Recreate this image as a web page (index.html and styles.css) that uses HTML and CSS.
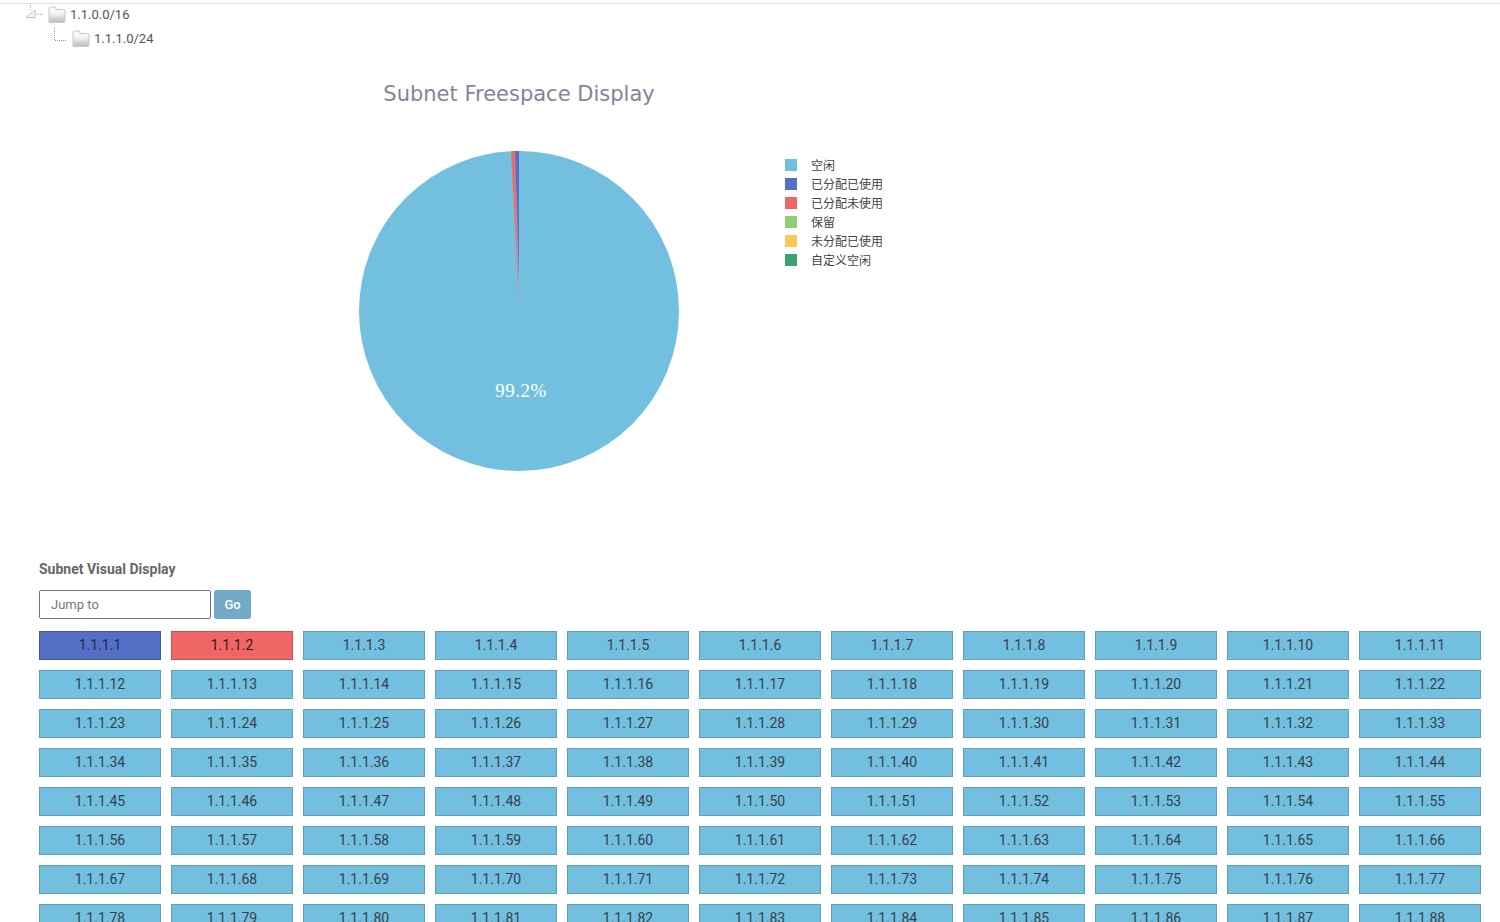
FILE: index.html
```html
<!DOCTYPE html>
<html lang="en">
<head>
<meta charset="utf-8">
<title>Subnet Freespace Display</title>
<link rel="stylesheet" href="styles.css">
</head>
<body>
<div class="page">
  <ul class="tree">
    <li class="tree-row tree-root">
      <svg class="tree-joint" width="20" height="18" viewBox="0 0 20 18"><path d="M5.500 0V6" fill="none" stroke="#b5b5b5" stroke-dasharray="1 1"/><path d="M1 12.500H10V5Z" fill="#f2f2f2" stroke="#c4c4c4"/><path d="M11 9.500H18" stroke="#aaa" stroke-dasharray="1 1"/></svg>
      <svg class="folder" width="18" height="17" viewBox="0 0 18 17"><use href="#folder"/></svg>
      <span>1.1.0.0/16</span>
    </li>
    <li class="tree-row tree-child">
      <svg class="tree-joint tree-joint-open" width="20" height="18" viewBox="0 0 20 18"><path d="M5.500 -2V11.500H18" fill="none" stroke="#999" stroke-dasharray="1 1"/></svg>
      <svg class="folder" width="18" height="17" viewBox="0 0 18 17"><use href="#folder"/></svg>
      <span>1.1.1.0/24</span>
    </li>
  </ul>
  <svg class="defs" width="0" height="0">
    <defs>
      <linearGradient id="fg" x1="0" y1="0" x2="0" y2="1"><stop offset="0" stop-color="#fdfdfd"/><stop offset=".45" stop-color="#f2f2f2"/><stop offset=".7" stop-color="#d6d6d6"/><stop offset="1" stop-color="#bdbdbd"/></linearGradient>
      <symbol id="folder" viewBox="0 0 18 17"><path d="M1 16V2.500Q1 1 2.500 1H7.500L8.500 3.500H15.500Q17 3.500 17 5V15Q17 16.500 15.500 16.500H2Q1 16.500 1 16Z" fill="url(#fg)" stroke="#c9c9c9"/></symbol>
    </defs>
  </svg>

  <h2 class="chart-title">Subnet Freespace Display</h2>
  <div class="chart-row">
    <svg class="pie" width="320" height="320" viewBox="0 0 320 320">
      <defs>
        <linearGradient id="sliver" x1="0" y1="0" x2="0" y2="1"><stop offset="0" stop-color="#f06666"/><stop offset=".7" stop-color="#e87a80"/><stop offset="1" stop-color="#a9a9b8"/></linearGradient>
      </defs>
      <circle cx="160" cy="160" r="160" fill="#73bfdf"/>
      <path d="M160 160L152 0.200A160 160 0 0 1 156 0.050Z" fill="url(#sliver)"/>
      <path d="M160 130L156 0.050A160 160 0 0 1 160 0Z" fill="#5470c6"/>
      <text class="pie-label" x="162" y="246" text-anchor="middle">99.2%</text>
    </svg>
    <ul class="legend">
      <li class="legend-item"><i class="swatch s-free"></i>空闲</li>
      <li class="legend-item"><i class="swatch s-used"></i>已分配已使用</li>
      <li class="legend-item"><i class="swatch s-idle"></i>已分配未使用</li>
      <li class="legend-item"><i class="swatch s-res"></i>保留</li>
      <li class="legend-item"><i class="swatch s-un"></i>未分配已使用</li>
      <li class="legend-item"><i class="swatch s-cus"></i>自定义空闲</li>
    </ul>
  </div>

  <h3 class="visual-title">Subnet Visual Display</h3>
  <form class="jump">
    <input class="jump-input" type="text" placeholder="Jump to">
    <button class="jump-go" type="button">Go</button>
  </form>
  <div class="grid" id="grid"></div>
</div>
<script src="grid.js"></script>
</body>
</html>
```
FILE: grid.js
```js
var grid = document.getElementById('grid');
for (var i = 1; i <= 88; i++) {
  var cell = document.createElement('div');
  cell.className = 'cell' + (i === 1 ? ' cell-used' : i === 2 ? ' cell-idle' : '');
  cell.textContent = '1.1.1.' + i;
  grid.appendChild(cell);
}
```
FILE: styles.css
```css
html, body {
  margin: 0;
  height: 922px;
  overflow: hidden;
  background: #fff;
}
.page {
  height: 922px;
  box-sizing: border-box;
  border-top: 1px solid #e1e1e1;
  margin-top: 3px;
  font-family: Roboto, "Noto Sans CJK SC", sans-serif;
  color: #555;
  overflow: hidden;
}
.tree {
  list-style: none;
  margin: -2px 0 0;
  padding: 0 0 0 25px;
}
.tree-row {
  display: flex;
  align-items: center;
  height: 24px;
  font-size: 13px;
}
.tree-child { padding-left: 24px; }
.tree-joint { flex: none; margin-right: 3px; }
.tree-joint-open { overflow: visible; }
.folder { flex: none; margin-right: 4px; }
.defs { position: absolute; }
.chart-title {
  margin: 29px 0 0;
  width: 1038px;
  height: 36px;
  text-align: center;
  font-family: "DejaVu Sans", sans-serif;
  font-size: 21px;
  line-height: 30px;
  font-weight: 400;
  color: #7f8698;
}
.chart-row {
  display: flex;
  align-items: flex-start;
  margin-top: 36px;
  padding-left: 359px;
}
.pie { flex: none; display: block; }
.pie-label {
  font-family: "Liberation Serif", serif;
  font-size: 19px;
  letter-spacing: 0.5px;
  fill: #fff;
}
.legend {
  list-style: none;
  margin: 4px 0 0 106px;
  padding: 0;
  font-size: 12px;
  color: #444;
}
.legend-item {
  display: flex;
  align-items: center;
  height: 19px;
}
.swatch {
  width: 12px;
  height: 12px;
  margin-right: 14px;
}
.s-free { background: #73bfdf; }
.s-used { background: #5470c6; }
.s-idle { background: #f06666; }
.s-res { background: #91cc75; }
.s-un { background: #fac858; }
.s-cus { background: #3ba272; }
.visual-title {
  margin: 89px 0 0 39px;
  font-size: 14px;
  line-height: 18px;
  font-weight: 700;
  color: #666;
}
.jump {
  display: flex;
  gap: 3px;
  margin: 12px 0 0 39px;
}
.jump-input {
  width: 172px;
  height: 29px;
  box-sizing: border-box;
  padding: 0 11px;
  border: 1px solid #777;
  border-radius: 2px;
  font: 13px Roboto, sans-serif;
  color: #555;
  outline: none;
}
.jump-input::placeholder { color: #777; opacity: 1; }
.jump-go {
  width: 37px;
  height: 29px;
  padding: 0;
  border: 0;
  border-radius: 3px;
  background: #72a9c6;
  color: #fff;
  font: 500 13px Roboto, sans-serif;
}
.grid {
  display: grid;
  grid-template-columns: repeat(11, 122px);
  grid-auto-rows: 29px;
  gap: 10px;
  margin: 12px 0 0 39px;
}
.cell {
  box-sizing: border-box;
  border: 1px solid #5f9fb8;
  background: #73bfdf;
  color: #33434d;
  font-size: 14px;
  line-height: 27px;
  text-align: center;
}
.cell-used { background: #5470c6; border-color: #435aa0; color: #1e2a50; }
.cell-idle { background: #f06666; border-color: #c25252; color: #3a1a1a; }
```
